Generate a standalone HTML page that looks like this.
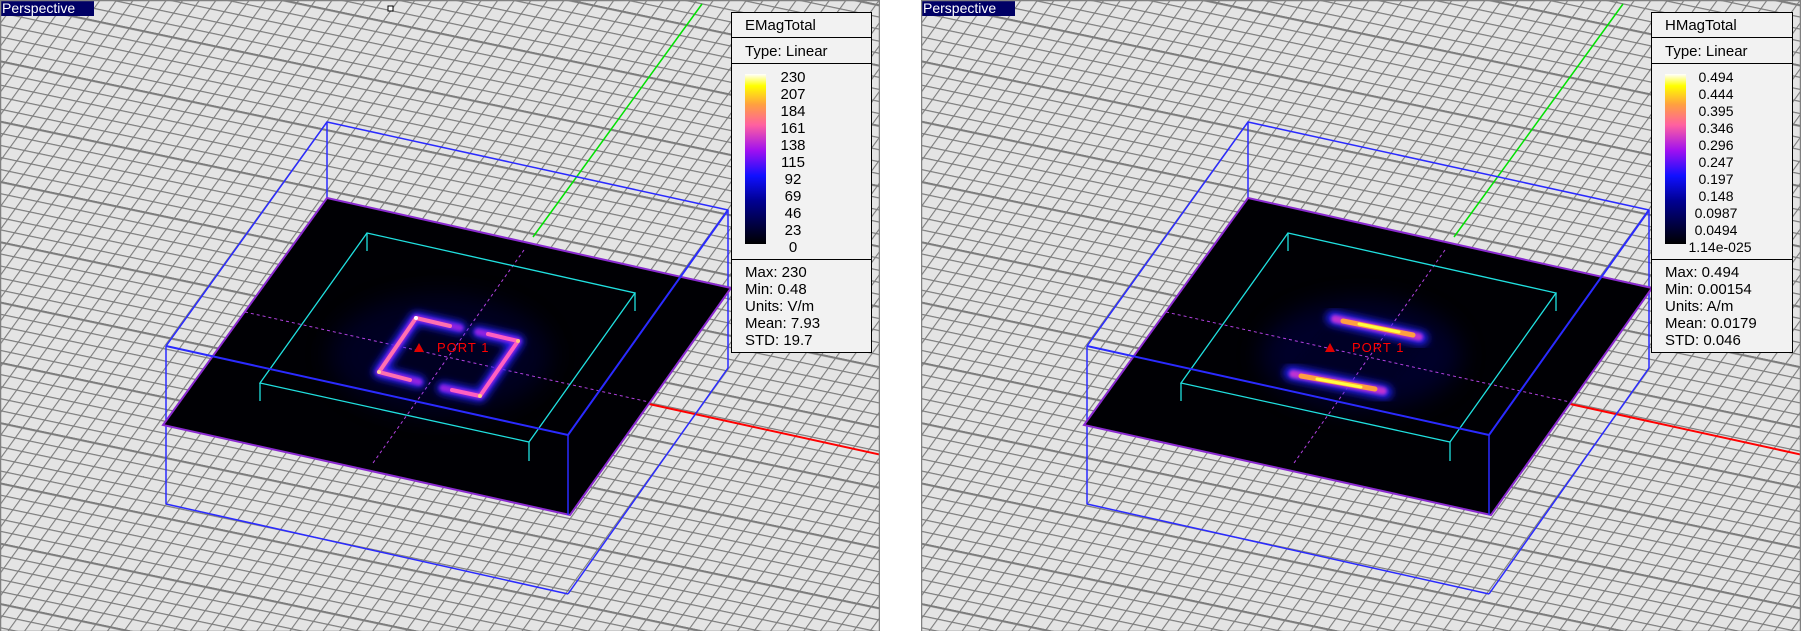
<!DOCTYPE html>
<html><head><meta charset="utf-8"><style>
html,body{margin:0;padding:0;background:#fff;width:1801px;height:631px;overflow:hidden}
svg{position:absolute;top:0;left:0}
text{font-family:"Liberation Sans",Arial,sans-serif}
</style></head><body>
<svg width="1801" height="631" viewBox="0 0 1801 631">
<defs>
<pattern id="gg" patternUnits="userSpaceOnUse" width="14.7" height="11.8" patternTransform="rotate(11.9) skewX(-24)">
<line x1="0" y1="0.6" x2="14.7" y2="0.6" stroke="#7c7c7c" stroke-width="1.2"/>
<line x1="0.6" y1="0" x2="0.6" y2="11.8" stroke="#7c7c7c" stroke-width="1.2"/></pattern>
<pattern id="gm" patternUnits="userSpaceOnUse" width="14.7" height="59" patternTransform="rotate(11.9) skewX(-24)">
<line x1="0" y1="0.6" x2="14.7" y2="0.6" stroke="#7c7c7c" stroke-width="2.8"/></pattern>
<filter id="bl" x="-50%" y="-50%" width="200%" height="200%"><feGaussianBlur stdDeviation="4"/></filter>
<filter id="bl2" x="-50%" y="-50%" width="200%" height="200%"><feGaussianBlur stdDeviation="1.5"/></filter>
<filter id="bl3" x="-50%" y="-50%" width="200%" height="200%"><feGaussianBlur stdDeviation="12"/></filter>
<linearGradient id="cm" x1="0" y1="1" x2="0" y2="0">
<stop offset="0" stop-color="#000"/><stop offset="0.25" stop-color="#000090"/><stop offset="0.4" stop-color="#1010ff"/>
<stop offset="0.55" stop-color="#a010f0"/><stop offset="0.7" stop-color="#ff60a0"/><stop offset="0.82" stop-color="#ffa040"/>
<stop offset="0.93" stop-color="#ffff00"/><stop offset="1" stop-color="#ffffff"/></linearGradient>
<clipPath id="pc"><rect x="0" y="0" width="880" height="631"/></clipPath>
<g id="scene">
<rect x="0" y="0" width="880" height="631" fill="#e4e4e4"/>
<rect x="0" y="0" width="880" height="631" fill="url(#gg)"/>
<rect x="0" y="0" width="880" height="631" fill="url(#gm)"/>
<line x1="702" y1="4" x2="533" y2="237" stroke="#00e000" stroke-width="1.5"/>
<line x1="649" y1="404" x2="891" y2="457" stroke="#ff0000" stroke-width="2"/>
<polyline points="166,346 327,122 728,210 728,368" fill="none" stroke="#2a2aff" stroke-width="1.5"/>
<line x1="327" y1="122" x2="327" y2="198" stroke="#2a2aff" stroke-width="1.5"/>
<line x1="166" y1="346" x2="166" y2="504" stroke="#2a2aff" stroke-width="1.5"/>
<line x1="166" y1="504" x2="568" y2="594" stroke="#2a2aff" stroke-width="1.5"/>
<line x1="568" y1="594" x2="728" y2="368" stroke="#2a2aff" stroke-width="1.5"/>
<polygon points="327,198 731,288 570,515 163,425" fill="#000004" stroke="#8a2ad0" stroke-width="2"/>
</g>
</defs>

<g clip-path="url(#pc)">
<use href="#scene"/>
<ellipse cx="440" cy="355" rx="110" ry="60" fill="#000040" opacity="0.5" filter="url(#bl3)"/>
<line x1="245" y1="312" x2="649" y2="402" stroke="#b040e0" stroke-width="1" stroke-dasharray="3,3"/>
<line x1="524" y1="250" x2="373" y2="463" stroke="#b040e0" stroke-width="1" stroke-dasharray="3,3"/>
<g fill="none" stroke-linecap="round" stroke-linejoin="round">
<polyline points="460,328 416,318 379,372 419,382" stroke="#2020ff" stroke-width="12" filter="url(#bl)"/>
<polyline points="478,332 518,341 480,396 443,388" stroke="#2020ff" stroke-width="12" filter="url(#bl)"/>
<polyline points="460,328 416,318 379,372 419,382" stroke="#9020e0" stroke-width="7" filter="url(#bl2)"/>
<polyline points="478,332 518,341 480,396 443,388" stroke="#9020e0" stroke-width="7" filter="url(#bl2)"/>
<polyline points="450,326 416,318 379,372 410,380" stroke="#ff70b0" stroke-width="4"/>
<polyline points="488,334 518,341 480,396 452,390" stroke="#ff60c0" stroke-width="4"/>
</g>
<circle cx="416" cy="318" r="2" fill="#fff"/><circle cx="379" cy="372" r="2" fill="#ffd0a0"/>
<circle cx="480" cy="396" r="2" fill="#ffd080"/><circle cx="518" cy="341" r="2" fill="#ffc080"/>
<polygon points="367,233 635,293 529,442 260,383" fill="none" stroke="#20e0e0" stroke-width="1.3"/>
<g stroke="#20e0e0" stroke-width="1.3"><line x1="367" y1="233" x2="367" y2="251"/><line x1="635" y1="293" x2="635" y2="311"/><line x1="260" y1="383" x2="260" y2="401"/><line x1="529" y1="442" x2="529" y2="461"/></g>
<polyline points="166,346 568,435 728,210" fill="none" stroke="#2a2aff" stroke-width="2"/>
<line x1="568" y1="435" x2="568" y2="515" stroke="#2a2aff" stroke-width="1.5"/>
<polygon points="419,343 414,352 424,352" fill="#e00000"/>
<text x="437" y="352" font-size="13" fill="#ff0000" letter-spacing="1">PORT 1</text>
<rect x="731.5" y="12.5" width="140" height="340" fill="#f2f2f2" stroke="#000"/>
<line x1="731" y1="37.5" x2="872" y2="37.5" stroke="#000"/><line x1="731" y1="63.5" x2="872" y2="63.5" stroke="#000"/><line x1="731" y1="259.5" x2="872" y2="259.5" stroke="#000"/>
<rect x="745" y="74" width="21" height="170" fill="url(#cm)"/>
<g font-size="15" fill="#000"><text x="745" y="30">EMagTotal</text><text x="745" y="56">Type: Linear</text>
<g text-anchor="middle"><text x="793" y="82">230</text><text x="793" y="99">207</text><text x="793" y="116">184</text><text x="793" y="133">161</text><text x="793" y="150">138</text><text x="793" y="167">115</text><text x="793" y="184">92</text><text x="793" y="201">69</text><text x="793" y="218">46</text><text x="793" y="235">23</text><text x="793" y="252">0</text></g>
<text x="745" y="277">Max: 230</text><text x="745" y="294">Min: 0.48</text><text x="745" y="311">Units: V/m</text><text x="745" y="328">Mean: 7.93</text><text x="745" y="345">STD: 19.7</text></g>
<rect x="0" y="0" width="94" height="16" fill="#000066"/>
<text x="2" y="13" font-size="14" fill="#fff">Perspective</text>
<rect x="388" y="6" width="5" height="5" fill="#fff" stroke="#000"/>
<rect x="0.5" y="0.5" width="879" height="631" fill="none" stroke="#808080" stroke-width="1.5"/>
</g>

<g transform="translate(921,0)"><g clip-path="url(#pc)">
<use href="#scene"/>
<ellipse cx="440" cy="355" rx="100" ry="55" fill="#000050" opacity="0.5" filter="url(#bl3)"/>
<polygon points="409,322 502,341 466,392 367,372" fill="#000028" opacity="0.8" filter="url(#bl2)"/>
<line x1="245" y1="312" x2="649" y2="402" stroke="#b040e0" stroke-width="1" stroke-dasharray="3,3"/>
<line x1="524" y1="250" x2="373" y2="463" stroke="#b040e0" stroke-width="1" stroke-dasharray="3,3"/>
<g stroke-linecap="round">
<line x1="412" y1="318" x2="500" y2="338" stroke="#2020ff" stroke-width="14" filter="url(#bl)"/>
<line x1="370" y1="373" x2="464" y2="392" stroke="#2020ff" stroke-width="14" filter="url(#bl)"/>
<line x1="414" y1="319" x2="498" y2="337" stroke="#c030d0" stroke-width="8" filter="url(#bl2)"/>
<line x1="372" y1="374" x2="462" y2="391" stroke="#c030d0" stroke-width="8" filter="url(#bl2)"/>
<line x1="422" y1="321" x2="492" y2="335" stroke="#ffa040" stroke-width="5"/>
<line x1="380" y1="376" x2="454" y2="389" stroke="#ffa040" stroke-width="5"/>
<line x1="438" y1="324" x2="478" y2="332" stroke="#ffff40" stroke-width="3"/>
<line x1="396" y1="379" x2="440" y2="387" stroke="#ffff40" stroke-width="3"/>
</g>
<polygon points="367,233 635,293 529,442 260,383" fill="none" stroke="#20e0e0" stroke-width="1.3"/>
<g stroke="#20e0e0" stroke-width="1.3"><line x1="367" y1="233" x2="367" y2="251"/><line x1="635" y1="293" x2="635" y2="311"/><line x1="260" y1="383" x2="260" y2="401"/><line x1="529" y1="442" x2="529" y2="461"/></g>
<polyline points="166,346 568,435 728,210" fill="none" stroke="#2a2aff" stroke-width="2"/>
<line x1="568" y1="435" x2="568" y2="515" stroke="#2a2aff" stroke-width="1.5"/>
<polygon points="409,343 404,352 414,352" fill="#e00000"/>
<text x="431" y="352" font-size="13" fill="#ff0000" letter-spacing="1">PORT 1</text>
<rect x="730.5" y="12.5" width="141" height="340" fill="#f2f2f2" stroke="#000"/>
<line x1="730" y1="37.5" x2="872" y2="37.5" stroke="#000"/><line x1="730" y1="63.5" x2="872" y2="63.5" stroke="#000"/><line x1="730" y1="259.5" x2="872" y2="259.5" stroke="#000"/>
<rect x="744" y="74" width="21" height="170" fill="url(#cm)"/>
<g font-size="15" fill="#000"><text x="744" y="30">HMagTotal</text><text x="744" y="56">Type: Linear</text>
<g text-anchor="middle" font-size="14"><text x="795" y="82">0.494</text><text x="795" y="99">0.444</text><text x="795" y="116">0.395</text><text x="795" y="133">0.346</text><text x="795" y="150">0.296</text><text x="795" y="167">0.247</text><text x="795" y="184">0.197</text><text x="795" y="201">0.148</text><text x="795" y="218">0.0987</text><text x="795" y="235">0.0494</text><text x="799" y="252">1.14e-025</text></g>
<text x="744" y="277">Max: 0.494</text><text x="744" y="294">Min: 0.00154</text><text x="744" y="311">Units: A/m</text><text x="744" y="328">Mean: 0.0179</text><text x="744" y="345">STD: 0.046</text></g>
<rect x="0" y="0" width="94" height="16" fill="#000066"/>
<text x="2" y="13" font-size="14" fill="#fff">Perspective</text>
<rect x="0.5" y="0.5" width="879" height="631" fill="none" stroke="#808080" stroke-width="1.5"/>
</g></g>
</svg>
</body></html>
